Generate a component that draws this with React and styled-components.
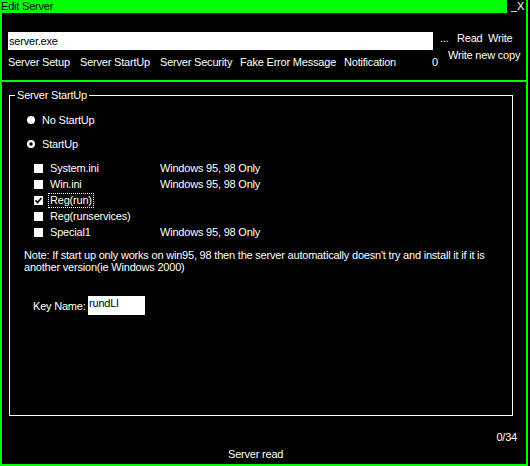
import React from 'react';
import styled, { createGlobalStyle } from 'styled-components';

const GREEN = '#00ff00';

const Global = createGlobalStyle`
  html, body { margin: 0; padding: 0; background: #000; }
  body {
    font-family: "Liberation Sans", Arial, sans-serif;
    font-size: 11px;
    letter-spacing: -0.2px;
    color: #fff;
  }
  * { box-sizing: border-box; }
`;

const Window = styled.div`
  width: 528px;
  height: 466px;
  display: flex;
  flex-direction: column;
  background: #000;
`;

const TitleBar = styled.div`
  display: flex;
  height: 13px;
  flex-shrink: 0;
`;

const TitleText = styled.div`
  flex: 1;
  background: ${GREEN};
  color: #000;
  padding-left: 1px;
  line-height: 13px;
  white-space: nowrap;
`;

const Controls = styled.div`
  width: 21px;
  border-right: 2px solid ${GREEN};
  color: #fff;
  line-height: 13px;
  padding-left: 4px;
  white-space: nowrap;
`;

const Frame = styled.div`
  flex: 1;
  min-height: 0;
  display: flex;
  flex-direction: column;
  border: 2px solid ${GREEN};
  border-top: none;
`;

const TopArea = styled.div`
  height: 69px;
  flex-shrink: 0;
  display: flex;
  padding: 19px 0 0 6px;
  border-bottom: 2px solid ${GREEN};
`;

const LeftCol = styled.div`
  width: 425px;
  display: flex;
  flex-direction: column;
`;

const FileInput = styled.div`
  height: 18px;
  background: #fff;
  color: #000;
  padding-left: 1px;
  line-height: 18px;
`;

const TabRow = styled.div`
  display: flex;
  margin-top: 6px;
  line-height: 13px;
  white-space: nowrap;
`;

const Tab = styled.div`
  width: ${(p) => p.$w}px;
  flex-shrink: 0;
`;

const RightCol = styled.div`
  margin-left: 7px;
  display: flex;
  flex-direction: column;
  line-height: 13px;
  white-space: nowrap;
`;

const ActionRow = styled.div`
  display: flex;
`;

const Action = styled.div`
  width: ${(p) => (p.$w ? `${p.$w}px` : 'auto')};
`;

const WriteNew = styled.div`
  margin-left: 8px;
  margin-top: 4px;
`;

const Group = styled.div`
  flex: 1;
  margin: 7px 13px 0 7px;
  display: flex;
  flex-direction: column;
`;

const GroupHeader = styled.div`
  display: flex;
  height: 13px;
  line-height: 13px;
  flex-shrink: 0;
`;

const HeaderCap = styled.div`
  width: 6px;
  margin-top: 6px;
  border-top: 1px solid #fff;
  border-left: 1px solid #fff;
`;

const HeaderLabel = styled.div`
  padding: 0 2px;
  white-space: nowrap;
`;

const HeaderLine = styled.div`
  flex: 1;
  margin-top: 6px;
  border-top: 1px solid #fff;
  border-right: 1px solid #fff;
`;

const GroupBody = styled.div`
  flex: 1;
  border: 1px solid #fff;
  border-top: none;
  padding-top: 10px;
  display: flex;
  flex-direction: column;
`;

const RadioGroup = styled.div`
  display: flex;
  flex-direction: column;
  gap: 8px;
  padding-left: 17px;
`;

const RadioRow = styled.div`
  height: 16px;
  display: flex;
  align-items: center;
  gap: 7px;
`;

const RadioDot = styled.span`
  width: 8px;
  height: 8px;
  border-radius: 50%;
  background: ${(p) =>
    p.$ring ? 'radial-gradient(circle, #000 0 1.4px, #fff 1.9px)' : '#fff'};
`;

const CheckList = styled.div`
  margin-top: 8px;
  padding-left: 24px;
  display: flex;
  flex-direction: column;
`;

const CheckRow = styled.div`
  height: 16px;
  display: flex;
  align-items: center;
  white-space: nowrap;
`;

const CheckBox = styled.span`
  width: 9px;
  height: 9px;
  background: #fff;
  margin-right: 5px;
  display: flex;
  align-items: center;
  justify-content: center;
`;

const CheckLabel = styled.span`
  width: 112px;
  display: flex;
`;

const CheckText = styled.span`
  padding: 0 1px;
  line-height: 13px;
  border: 1px dotted ${(p) => (p.$focus ? '#fff' : 'transparent')};
`;

const Note = styled.div`
  margin-top: 9px;
  padding-left: 14px;
  line-height: 12px;
  white-space: nowrap;
`;

const KeyRow = styled.div`
  margin-top: 23px;
  padding-left: 23px;
  height: 19px;
  display: flex;
  align-items: center;
`;

const KeyLabel = styled.span`
  width: 55px;
`;

const KeyInput = styled.div`
  width: 57px;
  height: 19px;
  background: #fff;
  color: #000;
  padding: 1px 1px 0;
  line-height: 13px;
`;

const Footer = styled.div`
  height: 48px;
  flex-shrink: 0;
  padding-top: 15px;
  line-height: 13px;
`;

const Count = styled.div`
  text-align: right;
  padding-right: 9px;
`;

const Status = styled.div`
  margin-top: 4px;
  padding-left: 226px;
`;

const CheckMark = () => (
  <svg width="9" height="9" viewBox="0 0 9 9">
    <polyline points="1.5,4.3 3.5,6.5 7.5,2" fill="none" stroke="#000" strokeWidth="1.6" />
  </svg>
);

const tabs = [
  ['Server Setup', 72],
  ['Server StartUp', 80],
  ['Server Security', 80],
  ['Fake Error Message', 104],
  ['Notification', 88],
];

const checks = [
  { label: 'System.ini', note: 'Windows 95, 98 Only' },
  { label: 'Win.ini', note: 'Windows 95, 98 Only' },
  { label: 'Reg(run)', checked: true, focus: true },
  { label: 'Reg(runservices)' },
  { label: 'Special1', note: 'Windows 95, 98 Only' },
];

export default function App() {
  return (
    <>
      <Global />
      <Window>
        <TitleBar>
          <TitleText>Edit Server</TitleText>
          <Controls>_X</Controls>
        </TitleBar>
        <Frame>
          <TopArea>
            <LeftCol>
              <FileInput>server.exe</FileInput>
              <TabRow>
                {tabs.map(([t, w]) => (
                  <Tab key={t} $w={w}>{t}</Tab>
                ))}
                <Tab $w={10}>0</Tab>
              </TabRow>
            </LeftCol>
            <RightCol>
              <ActionRow>
                <Action $w={17}>...</Action>
                <Action $w={31}>Read</Action>
                <Action>Write</Action>
              </ActionRow>
              <WriteNew>Write new copy</WriteNew>
            </RightCol>
          </TopArea>
          <Group>
            <GroupHeader>
              <HeaderCap />
              <HeaderLabel>Server StartUp</HeaderLabel>
              <HeaderLine />
            </GroupHeader>
            <GroupBody>
              <RadioGroup>
                <RadioRow>
                  <RadioDot />
                  No StartUp
                </RadioRow>
                <RadioRow>
                  <RadioDot $ring />
                  StartUp
                </RadioRow>
              </RadioGroup>
              <CheckList>
                {checks.map((c) => (
                  <CheckRow key={c.label}>
                    <CheckBox>{c.checked && <CheckMark />}</CheckBox>
                    <CheckLabel>
                      <CheckText $focus={c.focus}>{c.label}</CheckText>
                    </CheckLabel>
                    {c.note}
                  </CheckRow>
                ))}
              </CheckList>
              <Note>
                Note: If start up only works on win95, 98 then the server automatically doesn't try and install it if it is
                <br />
                another version(ie Windows 2000)
              </Note>
              <KeyRow>
                <KeyLabel>Key Name:</KeyLabel>
                <KeyInput>rundLl</KeyInput>
              </KeyRow>
            </GroupBody>
          </Group>
          <Footer>
            <Count>0/34</Count>
            <Status>Server read</Status>
          </Footer>
        </Frame>
      </Window>
    </>
  );
}
